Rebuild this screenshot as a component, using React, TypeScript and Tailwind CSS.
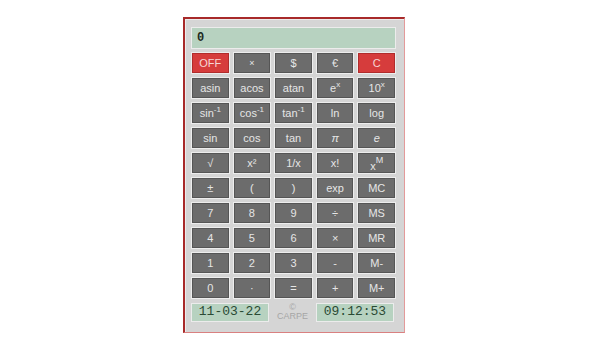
import React from 'react';

type Key = { label: React.ReactNode; red?: boolean };

const sup = (base: string, exp: string) => (
  <span>
    {base}
    <sup className="text-[8px] top-[-5px]">{exp}</sup>
  </span>
);

const keys: Key[] = [
  { label: 'OFF', red: true },
  { label: <span className="text-[9px]">×</span> },
  { label: '$' },
  { label: '€' },
  { label: 'C', red: true },
  { label: 'asin' },
  { label: 'acos' },
  { label: 'atan' },
  { label: sup('e', 'x') },
  { label: sup('10', 'x') },
  { label: sup('sin', '-1') },
  { label: sup('cos', '-1') },
  { label: sup('tan', '-1') },
  { label: 'ln' },
  { label: 'log' },
  { label: 'sin' },
  { label: 'cos' },
  { label: 'tan' },
  { label: <span className="italic">π</span> },
  { label: <span className="italic">e</span> },
  { label: '√' },
  { label: 'x²' },
  { label: '1/x' },
  { label: 'x!' },
  {
    label: (
      <span className="relative top-[3px]">
        x<sup className="text-[9px] top-[-7px]">M</sup>
      </span>
    ),
  },
  { label: '±' },
  { label: '(' },
  { label: ')' },
  { label: 'exp' },
  { label: 'MC' },
  { label: '7' },
  { label: '8' },
  { label: '9' },
  { label: '÷' },
  { label: 'MS' },
  { label: '4' },
  { label: '5' },
  { label: '6' },
  { label: '×' },
  { label: 'MR' },
  { label: '1' },
  { label: '2' },
  { label: '3' },
  { label: '-' },
  { label: 'M-' },
  { label: '0' },
  { label: '·' },
  { label: '=' },
  { label: '+' },
  { label: 'M+' },
];

export default function App() {
  return (
    <div className="w-[600px] h-[360px] bg-white pl-[183px] pt-[17px] font-['Liberation_Sans',Arial,sans-serif]">
      {/* Calculator frame */}
      <div className="w-[222px] h-[316px] bg-[#d5d5d5] border-l-2 border-t-2 border-r border-b border-l-[#a82a2a] border-t-[#a82a2a] border-r-[#e39a9a] border-b-[#d98080] shadow-[inset_1px_1px_0_#ececec] pl-[7px] pt-[9px]">
        {/* Display */}
        <div className="w-[203px] h-[20px] bg-[#b7d2c0] shadow-[0_0_0_1px_#ececec] flex items-center pl-[5px] font-['Liberation_Mono',monospace] text-[12px] font-bold text-[#1c2a20]">
          0
        </div>

        {/* Keys */}
        <div className="w-[203px] mt-[5px] grid grid-cols-5 gap-x-[5px] gap-y-[5px]">
          {keys.map((k, i) => (
            <button
              key={i}
              className={
                'h-[20px] flex items-center justify-center text-[11px] leading-none border shadow-[0_0_0_1px_#ededed] ' +
                (k.red
                  ? 'bg-[#d63c3c] border-[#b02c2c] text-[#f6d6d6]'
                  : 'bg-[#6c6c6c] border-[#555555] text-[#e6e6e6]')
              }
            >
              {k.label}
            </button>
          ))}
        </div>

        {/* Footer */}
        <div className="w-[203px] mt-[5px] flex items-center justify-between">
          <div className="w-[76px] h-[17px] bg-[#b7d2c0] shadow-[0_0_0_1px_#ececec] flex items-center justify-center font-['Liberation_Mono',monospace] text-[13px] text-[#2a4a34]">
            11-03-22
          </div>
          <div className="flex flex-col items-center leading-none text-[#a6a6a6]">
            <span className="text-[9px]">©</span>
            <span className="text-[9px]">CARPE</span>
          </div>
          <div className="w-[76px] h-[17px] mr-[2px] bg-[#b7d2c0] shadow-[0_0_0_1px_#ececec] flex items-center justify-center font-['Liberation_Mono',monospace] text-[13px] text-[#2a4a34]">
            09:12:53
          </div>
        </div>
      </div>
    </div>
  );
}
